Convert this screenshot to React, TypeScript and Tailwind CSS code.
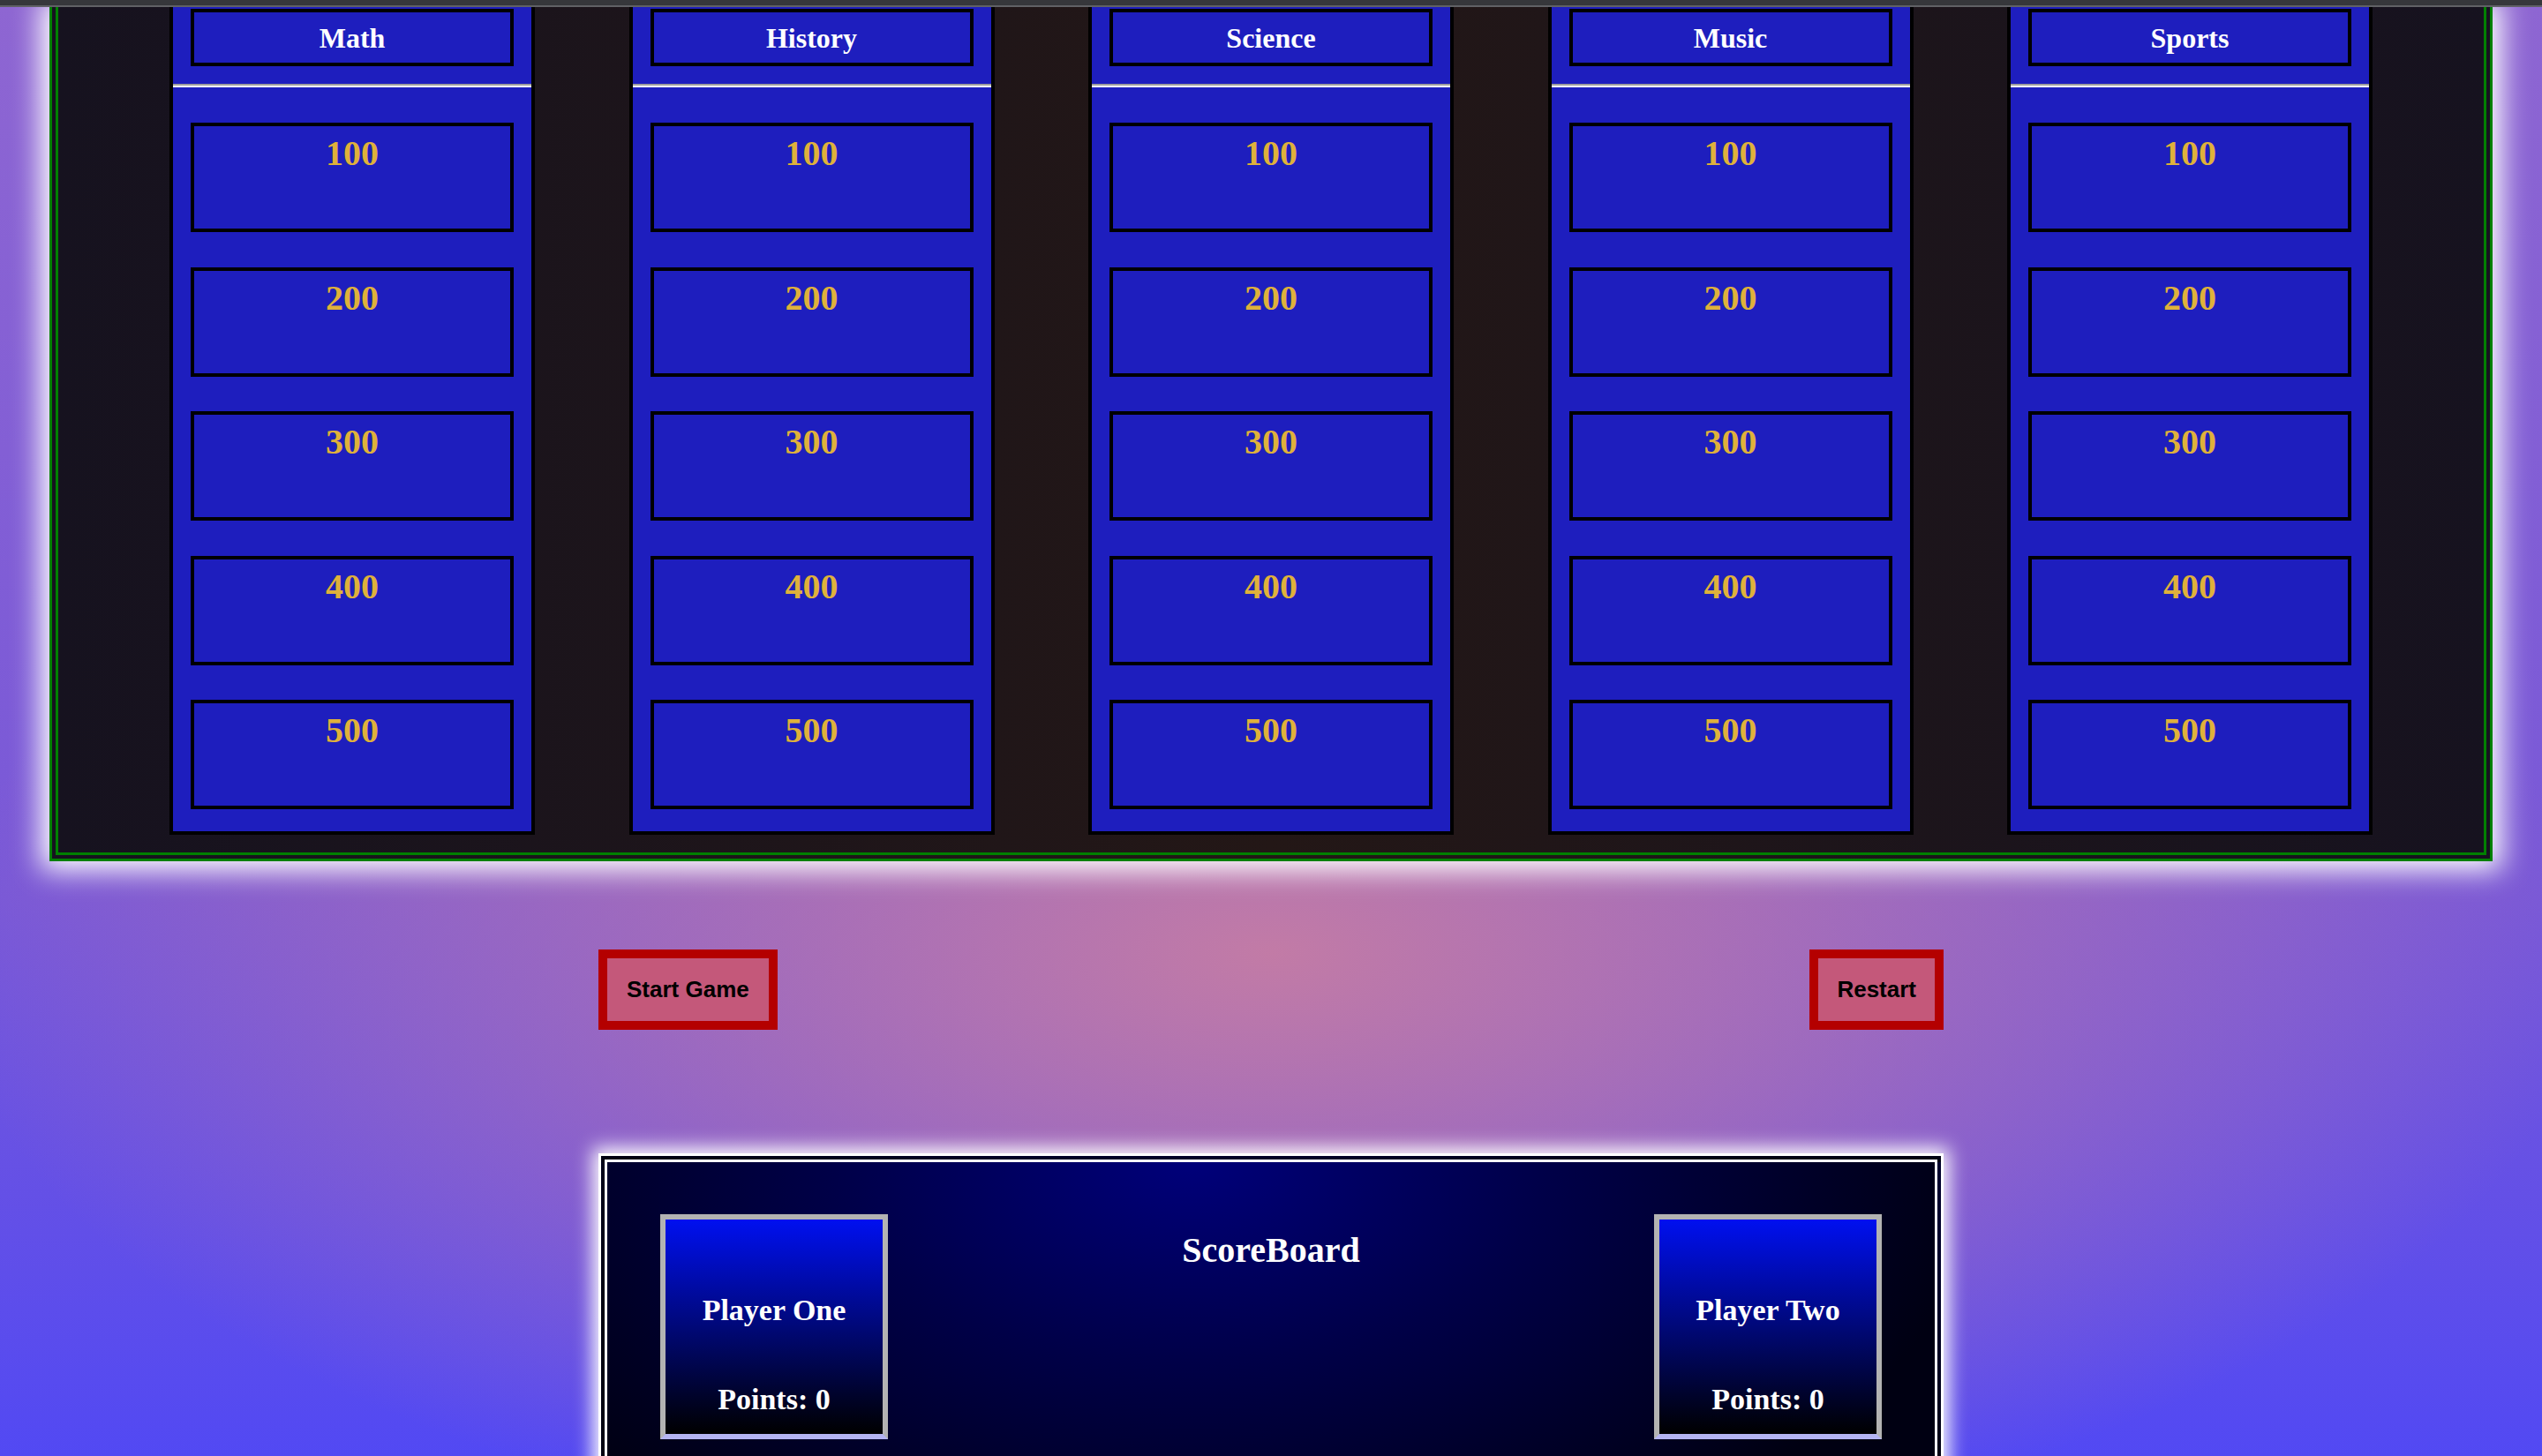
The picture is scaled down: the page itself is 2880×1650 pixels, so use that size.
const categories = ["Math", "History", "Science", "Music", "Sports"];
const values = [100, 200, 300, 400, 500];

function Column({ title }: { title: string }) {
  return (
    <div className="w-[414px] border-4 border-t-0 border-black bg-[#1e1ebe] pt-[2px] pb-[25px] flex flex-col">
      <div className="mx-[20px] h-[65px] border-4 border-black flex items-center justify-center text-white font-bold text-[32px] font-['Liberation_Serif',serif]">
        {title}
      </div>
      <div className="mt-[20px] h-[4px] border-t-2 border-t-[#a0a0a0] border-b-2 border-b-white" />
      <div className="mt-[40px] px-[20px] flex flex-col gap-[39.5px]">
        {values.map((v) => (
          <button
            key={v}
            className="h-[124px] border-4 border-black bg-[#1e1ebe] pt-[8px] text-[#dfb13b] font-bold text-[40px] leading-[1.15] font-['Liberation_Serif',serif] flex justify-center items-start"
          >
            {v}
          </button>
        ))}
      </div>
    </div>
  );
}

function PlayerCard({ name }: { name: string }) {
  return (
    <div className="w-[258px] h-[255px] border-[6px] border-[#b3b3b3] border-b-[#b4b4f2] bg-[linear-gradient(to_bottom,#0010f0,#000000)] flex flex-col items-center pt-[83px] text-white font-bold text-[34px] leading-[1.15] font-['Liberation_Serif',serif]">
      <div>{name}</div>
      <div className="mt-[62px]">Points: 0</div>
    </div>
  );
}

export default function App() {
  return (
    <div className="h-[1650px] w-full overflow-hidden bg-[radial-gradient(ellipse_1500px_700px_at_50%_1080px,#c27ba6_0%,rgba(194,123,166,0.5)_50%,rgba(194,123,166,0)_100%),linear-gradient(to_bottom,#8e66d2_0%,#7858d8_62%,#5249f3_100%)]">
      {/* top strip */}
      <div className="relative z-10 h-[8px] bg-[#36373b] border-b-2 border-[#606165]" />

      {/* Board */}
      <div className="mx-auto w-[2768px] border-[10px] border-t-0 border-double border-[#008000] bg-[linear-gradient(to_right,#16121f,#231716_50%,#16121f)] shadow-[0_0_30px_10px_#ffffff] pb-[20px]">
        <div className="flex justify-center gap-[106.5px]">
          {categories.map((c) => (
            <Column key={c} title={c} />
          ))}
        </div>
      </div>

      {/* Controls */}
      <div className="mt-[100px] mx-auto w-[1524px] flex justify-between">
        <button className="h-[91px] px-[22px] border-[10px] border-[#b40000] bg-[#c4587a] flex items-center text-black font-bold text-[26px] font-['Liberation_Sans',Arial,sans-serif]">
          Start Game
        </button>
        <button className="h-[91px] px-[21px] border-[10px] border-[#b40000] bg-[#c4587a] flex items-center text-black font-bold text-[26px] font-['Liberation_Sans',Arial,sans-serif]">
          Restart
        </button>
      </div>

      {/* Scoreboard */}
      <div className="mt-[140px] mx-auto w-[1524px] h-[420px] border-[10px] border-double border-white shadow-[0_0_20px_6px_#ffffff] bg-[radial-gradient(ellipse_900px_500px_at_44%_0%,#00007a_0%,#000048_45%,#000012_100%)] px-[60px] pt-[59px] flex justify-between items-start">
        <PlayerCard name="Player One" />
        <div className="mt-[18px] text-white font-bold text-[40px] leading-[1.15] font-['Liberation_Serif',serif]">
          ScoreBoard
        </div>
        <PlayerCard name="Player Two" />
      </div>
    </div>
  );
}
